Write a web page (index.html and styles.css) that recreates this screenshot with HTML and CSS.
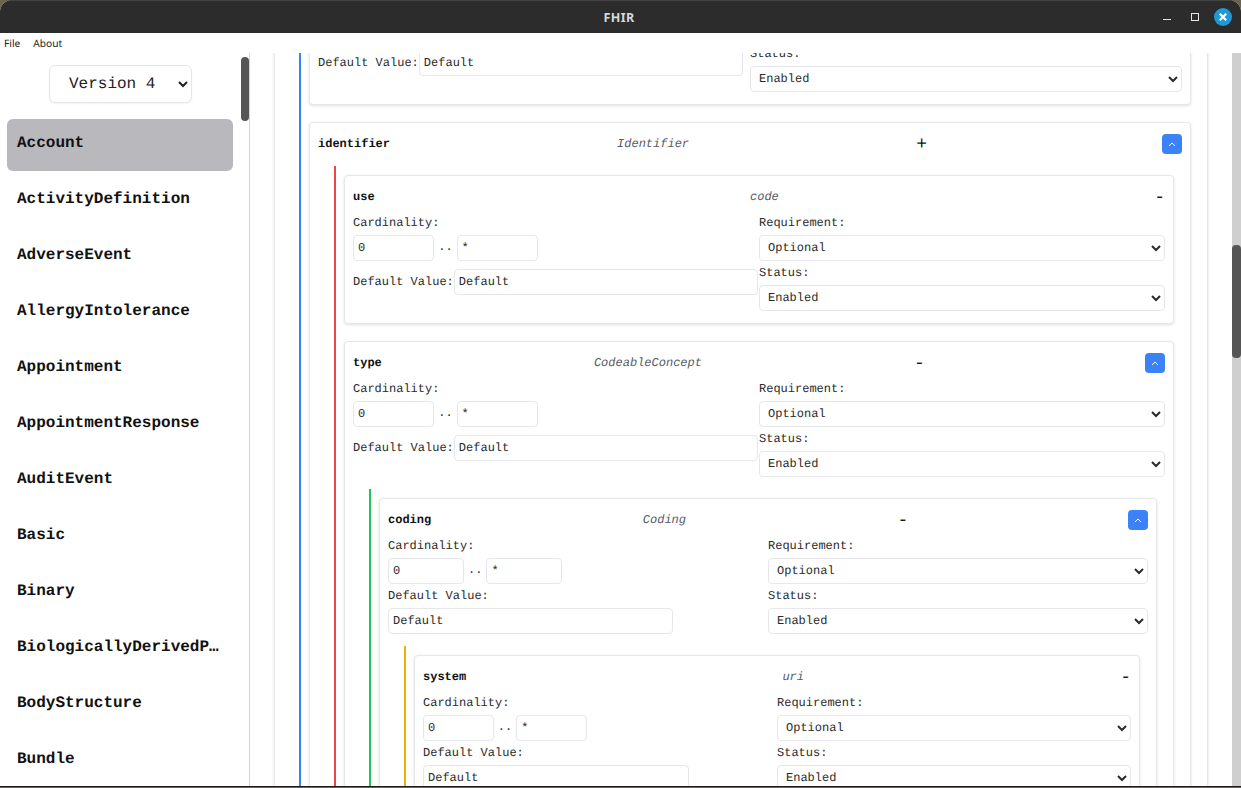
FILE: index.html
```html
<!DOCTYPE html>
<html lang="en">
<head>
<meta charset="utf-8">
<title>FHIR</title>
<link rel="stylesheet" href="styles.css">
</head>
<body>
<div class="window">
  <header class="titlebar">
    <span class="title">FHIR</span>
    <div class="controls">
      <span class="ctl-min"></span>
      <span class="ctl-max"></span>
      <span class="ctl-close"><svg width="18" height="18" viewBox="0 0 18 18"><path d="M5.8 5.8l6.4 6.4M12.2 5.8l-6.4 6.4" stroke="#fff" stroke-width="2.2" fill="none"/></svg></span>
    </div>
  </header>
  <nav class="menubar"><span>File</span><span>About</span></nav>
  <div class="body">
    <aside class="sidebar">
      <div class="version-wrap">
        <select class="version"><option>Version 4</option><option>Version 3</option></select>
      </div>
      <ul class="resources">
        <li class="resource active">Account</li>
        <li class="resource">ActivityDefinition</li>
        <li class="resource">AdverseEvent</li>
        <li class="resource">AllergyIntolerance</li>
        <li class="resource">Appointment</li>
        <li class="resource">AppointmentResponse</li>
        <li class="resource">AuditEvent</li>
        <li class="resource">Basic</li>
        <li class="resource">Binary</li>
        <li class="resource">BiologicallyDerivedProduct</li>
        <li class="resource">BodyStructure</li>
        <li class="resource">Bundle</li>
        <li class="resource">CapabilityStatement</li>
      </ul>
      <div class="thumb thumb-side"></div>
    </aside>
    <main class="main">
      <div class="content">
        <section class="card">
          <div class="nested blue">
            <section class="card">
              <div class="head"><span class="name">language</span><span class="type">code</span><span class="sym">-</span></div>
              <div class="fields">
                <div class="col">
                  <label class="lbl">Cardinality:</label>
                  <div class="card-row"><input class="num" value="0"><span class="dots">..</span><input class="num" value="*"></div>
                  <div class="default inline"><label class="lbl">Default Value:</label><input class="def" value="Default"></div>
                </div>
                <div class="col">
                  <label class="lbl">Requirement:</label>
                  <select class="sel"><option>Optional</option><option>Required</option></select>
                  <label class="lbl">Status:</label>
                  <select class="sel"><option>Enabled</option><option>Disabled</option></select>
                </div>
              </div>
            </section>
            <section class="card">
              <div class="head"><span class="name">identifier</span><span class="type">Identifier</span><span class="sym">+</span><button class="toggle"><svg width="8" height="5" viewBox="0 0 8 5"><path d="M1 4l3-3 3 3" stroke="#fff" stroke-width="1" fill="none"/></svg></button></div>
              <div class="nested red">
                <section class="card">
                  <div class="head"><span class="name">use</span><span class="type">code</span><span class="sym">-</span></div>
                  <div class="fields">
                    <div class="col">
                      <label class="lbl">Cardinality:</label>
                      <div class="card-row"><input class="num" value="0"><span class="dots">..</span><input class="num" value="*"></div>
                      <div class="default inline"><label class="lbl">Default Value:</label><input class="def" value="Default"></div>
                    </div>
                    <div class="col">
                      <label class="lbl">Requirement:</label>
                      <select class="sel"><option>Optional</option><option>Required</option></select>
                      <label class="lbl">Status:</label>
                      <select class="sel"><option>Enabled</option><option>Disabled</option></select>
                    </div>
                  </div>
                </section>
                <section class="card">
                  <div class="head"><span class="name">type</span><span class="type">CodeableConcept</span><span class="sym">-</span><button class="toggle"><svg width="8" height="5" viewBox="0 0 8 5"><path d="M1 4l3-3 3 3" stroke="#fff" stroke-width="1" fill="none"/></svg></button></div>
                  <div class="fields">
                    <div class="col">
                      <label class="lbl">Cardinality:</label>
                      <div class="card-row"><input class="num" value="0"><span class="dots">..</span><input class="num" value="*"></div>
                      <div class="default inline"><label class="lbl">Default Value:</label><input class="def" value="Default"></div>
                    </div>
                    <div class="col">
                      <label class="lbl">Requirement:</label>
                      <select class="sel"><option>Optional</option><option>Required</option></select>
                      <label class="lbl">Status:</label>
                      <select class="sel"><option>Enabled</option><option>Disabled</option></select>
                    </div>
                  </div>
                  <div class="nested green">
                    <section class="card">
                      <div class="head"><span class="name">coding</span><span class="type">Coding</span><span class="sym">-</span><button class="toggle"><svg width="8" height="5" viewBox="0 0 8 5"><path d="M1 4l3-3 3 3" stroke="#fff" stroke-width="1" fill="none"/></svg></button></div>
                      <div class="fields">
                        <div class="col">
                          <label class="lbl">Cardinality:</label>
                          <div class="card-row"><input class="num" value="0"><span class="dots">..</span><input class="num" value="*"></div>
                          <div class="default"><label class="lbl">Default Value:</label><input class="def" value="Default"></div>
                        </div>
                        <div class="col">
                          <label class="lbl">Requirement:</label>
                          <select class="sel"><option>Optional</option><option>Required</option></select>
                          <label class="lbl">Status:</label>
                          <select class="sel"><option>Enabled</option><option>Disabled</option></select>
                        </div>
                      </div>
                      <div class="nested yellow">
                        <section class="card">
                          <div class="head"><span class="name">system</span><span class="type">uri</span><span class="sym">-</span></div>
                          <div class="fields">
                            <div class="col">
                              <label class="lbl">Cardinality:</label>
                              <div class="card-row"><input class="num" value="0"><span class="dots">..</span><input class="num" value="*"></div>
                              <div class="default"><label class="lbl">Default Value:</label><input class="def" value="Default"></div>
                            </div>
                            <div class="col">
                              <label class="lbl">Requirement:</label>
                              <select class="sel"><option>Optional</option><option>Required</option></select>
                              <label class="lbl">Status:</label>
                              <select class="sel"><option>Enabled</option><option>Disabled</option></select>
                            </div>
                          </div>
                        </section>
                      </div>
                    </section>
                  </div>
                </section>
              </div>
            </section>
          </div>
        </section>
      </div>
      <div class="track"><div class="thumb thumb-main"></div></div>
    </main>
  </div>
</div>
</body>
</html>
```
FILE: styles.css
```css
* { box-sizing: border-box; text-rendering: geometricPrecision; }
html, body { margin: 0; padding: 0; height: 788px; overflow: hidden; }
body { background: #6e6250; font-family: "Liberation Mono", monospace; }
.window {
  height: 787px;
  display: flex;
  flex-direction: column;
  background: #fff;
  border-bottom: 1px solid #1c1c1c;
  overflow: hidden;
  border-radius: 12px 12px 0 0;
}
.titlebar {
  flex: 0 0 33px;
  background: #2c2c2c;
  border-top: 1px solid #444;
  position: relative;
  display: flex;
  align-items: center;
  justify-content: center;
}
.title {
  font: bold 12.5px "Noto Sans", sans-serif;
  color: #d8d8d8;
  letter-spacing: 0.4px;
  margin-right: 3px;
}
.controls { position: absolute; top: 0; right: 0; height: 32px; }
.ctl-min { position: absolute; left: -78px; top: 18px; width: 8px; height: 1px; background: #e6e6e6; }
.ctl-max { position: absolute; left: -50px; top: 12px; width: 8px; height: 8px; border: 1px solid #e6e6e6; }
.ctl-close { position: absolute; left: -27px; top: 7px; width: 18px; height: 18px; border-radius: 50%; background: #1f9ad6; display: block; }
.ctl-close svg { display: block; }
.menubar {
  flex: 0 0 20px;
  display: flex;
  align-items: center;
  gap: 13px;
  padding-left: 4px;
  font: 10.2px "Noto Sans", sans-serif;
  color: #222;
  background: #fff;
}
.body { flex: 1; min-height: 0; display: flex; }
.sidebar {
  flex: 0 0 250px;
  border-right: 1px solid #d4d4d4;
  position: relative;
  overflow: hidden;
  padding-right: 8px;
}
.version-wrap { padding-top: 12px; display: flex; justify-content: center; }
.version {
  width: 143px;
  height: 38px;
  padding: 0 4px 0 15px;
  font: 16px "Liberation Mono", monospace;
  color: #222;
  background: #fff;
  border: 1px solid #e5e7eb;
  border-radius: 6px;
  box-shadow: 0 1px 2px rgba(0, 0, 0, 0.06);
}
.resources { list-style: none; margin: 16px 8px 0 7px; padding: 0; }
.resource {
  height: 52px;
  margin-bottom: 4px;
  padding: 12px 10px 0;
  font-size: 16px;
  line-height: 24px;
  font-weight: bold;
  color: #111;
  border-radius: 6px;
  white-space: nowrap;
  overflow: hidden;
  text-overflow: ellipsis;
}
.resource.active { background: #b9b8bd; }
.thumb { position: absolute; background: #555; border-radius: 4px; }
.thumb-side { left: 241px; top: 4px; width: 8px; height: 64px; }
.main { flex: 1; min-width: 0; position: relative; overflow: hidden; padding-right: 9px; }
.track { position: absolute; top: 0; right: 0; bottom: 0; width: 9px; background: #cfcfcf; }
.thumb-main { left: 0; top: 192px; width: 9px; height: 113px; }
.content { padding: 0 24px; margin-top: -115px; font-size: 12px; color: #2a2a2a; }
.card {
  background: #fff;
  border: 1px solid #e5e7eb;
  border-radius: 4px;
  padding: 8px;
  box-shadow: 0 1px 3px rgba(0, 0, 0, 0.12);
}
.card + .card { margin-top: 17px; }
.head { height: 27px; padding-bottom: 1px; display: flex; align-items: center; justify-content: space-between; }
.name { font-weight: bold; color: #111; }
.type { font-style: italic; color: #555b66; }
.sym { font-size: 18px; color: #111; line-height: 27px; margin-top: 2px; }
.toggle {
  width: 20px;
  height: 20px;
  margin-left: 8px;
  padding: 0;
  border: 0;
  border-radius: 4px;
  background: #3b82f6;
  display: flex;
  align-items: center;
  justify-content: center;
}
.toggle svg { display: block; }
.fields { display: grid; grid-template-columns: 1fr 1fr; padding-bottom: 4px; }
.col { min-width: 0; }
.lbl { display: block; height: 24px; line-height: 24px; white-space: nowrap; }
.card-row { display: flex; align-items: center; }
.dots { margin: 0 4px 3px; }
input, .sel {
  height: 26px;
  font: 12px "Liberation Mono", monospace;
  color: #2a2a2a;
  background: #fff;
  border: 1px solid #e5e7eb;
  border-radius: 4px;
  padding: 0 4px;
}
.num { width: 20%; }
.def { width: 75%; }
.sel { display: block; width: 100%; }
.default { display: flex; flex-wrap: wrap; }
.default.inline { margin-top: 8px; flex-wrap: nowrap; align-items: center; }
.default.inline .lbl { height: auto; line-height: 16px; }
.nested { margin: 8px 0 0 16px; padding: 9px 8px 0; border-left: 2px solid; }
.content > .card > .nested { margin-top: 0; }
.blue { border-color: #3b82f6; }
.red { border-color: #ef4444; }
.green { border-color: #22c55e; }
.yellow { border-color: #eab308; }
```
